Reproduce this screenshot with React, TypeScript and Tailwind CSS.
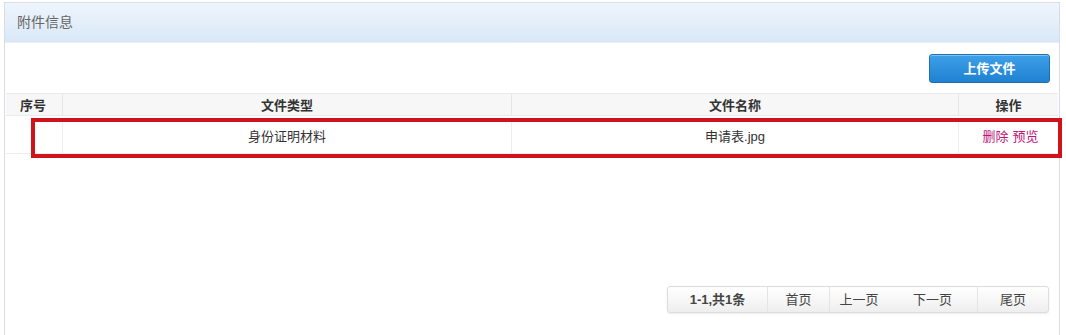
import React from "react";

const font = { fontFamily: '"Liberation Sans", "Noto Sans CJK SC", sans-serif' };

function Pager() {
  const items = [
    { label: "1-1,共1条", w: "w-[100px]", bold: true, sep: true },
    { label: "首页", w: "w-[62px]", sep: true },
    { label: "上一页", w: "w-[58px]", sep: false },
    { label: "下一页", w: "w-[90px]", sep: true },
    { label: "尾页", w: "w-[70px]", sep: false },
  ];
  return (
    <div className="flex h-[27px] rounded-[3px] border border-[#dcdcdc] bg-gradient-to-b from-[#ffffff] to-[#eeeeee] shadow-[0_1px_2px_rgba(0,0,0,0.08)]">
      {items.map((it, i) => (
        <div
          key={i}
          className={`${it.w} flex items-center justify-center text-[13px] text-[#444] ${
            it.sep ? "border-r border-[#e4e4e4]" : ""
          } ${it.bold ? "font-bold" : ""}`}
        >
          {it.label}
        </div>
      ))}
    </div>
  );
}

export default function App() {
  return (
    <div className="w-[1066px] h-[335px] bg-white overflow-hidden" style={font}>
      <div className="relative ml-[4px] mt-[2px] w-[1056px] h-[340px] border border-[#d6dde6] border-b-0">
        {/* header */}
        <div className="h-[40px] flex items-center pl-[12px] bg-gradient-to-b from-[#eef5fc] to-[#d9e8f7] border-b border-[#e6eef7]">
          <span className="text-[14px] text-[#666]">附件信息</span>
        </div>

        {/* toolbar */}
        <div className="flex justify-end pt-[11px] pr-[9px] h-[50px]">
          <button className="w-[121px] h-[29px] rounded-[3px] border border-[#1f6fae] bg-gradient-to-b from-[#3ea0e8] to-[#1e82d2] text-white text-[13px] font-bold shadow-[inset_0_1px_0_rgba(255,255,255,0.35)]">
            上传文件
          </button>
        </div>

        {/* table */}
        <div className="mx-[1px] text-[13px] text-[#333]">
          <div className="flex h-[23px] bg-[#f7f7f7] border-t border-b border-[#eaeaea] font-bold">
            <div className="w-[57px] flex items-center pl-[14px] pt-[2px] border-r border-[#e6e6e6]">序号</div>
            <div className="w-[449px] flex items-center justify-center pt-[2px] border-r border-[#e6e6e6]">文件类型</div>
            <div className="w-[447px] flex items-center justify-center pt-[2px] border-r border-[#e6e6e6]">文件名称</div>
            <div className="flex-1 flex items-center justify-center pt-[2px]">操作</div>
          </div>
          <div className="flex h-[38px] border-b border-[#eeeeee] pt-[4px]">
            <div className="w-[57px] border-r border-[#eeeeee]" />
            <div className="w-[449px] flex items-center justify-center border-r border-[#eeeeee]">身份证明材料</div>
            <div className="w-[447px] flex items-center justify-center border-r border-[#eeeeee]">申请表.jpg</div>
            <div className="flex-1 flex items-center justify-center pl-[4px] text-[#c0137a] gap-[4px]">
              <span>删除</span>
              <span>预览</span>
            </div>
          </div>
        </div>

        {/* annotation box */}
        <div className="absolute left-[26px] top-[115px] w-[1031px] h-[40px] border-[4px] border-[#d0121b] pointer-events-none" />

        {/* pager */}
        <div className="flex justify-end pr-[10px] mt-[132px]">
          <Pager />
        </div>
      </div>
    </div>
  );
}
